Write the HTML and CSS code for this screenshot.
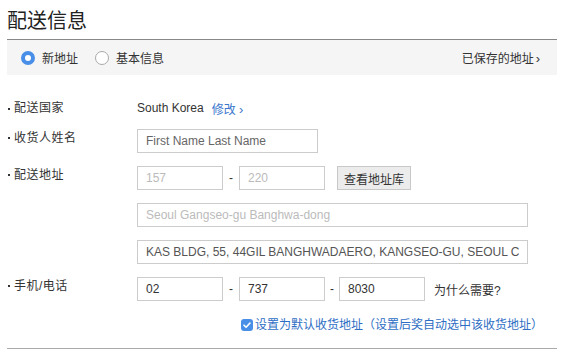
FILE: index.html
```html
<!DOCTYPE html>
<html lang="zh">
<head>
    <meta charset="UTF-8">
    <title>配送信息</title>
    <link rel="stylesheet" href="styles.css">
</head>
<body>
    <div class="page">
        <h1>配送信息</h1>
        <div class="tabs">
            <label class="tab"><input type="radio" name="mode" checked> 新地址</label>
            <label class="tab"><input type="radio" name="mode"> 基本信息</label>
            <a class="saved" href="#">已保存的地址<span class="arrow">›</span></a>
        </div>
        <form class="form">
            <div class="row row-country">
                <div class="label">配送国家</div>
                <div class="field">
                    <span class="country">South Korea</span>
                    <a class="link" href="#">修改 <span class="arrow">›</span></a>
                </div>
            </div>
            <div class="row">
                <div class="label">收货人姓名</div>
                <div class="field">
                    <input class="input input-name" type="text" value="First Name Last Name">
                </div>
            </div>
            <div class="row">
                <div class="label">配送地址</div>
                <div class="field">
                    <input class="input input-short" type="text" placeholder="157">
                    <span class="dash">-</span>
                    <input class="input input-short" type="text" placeholder="220">
                    <button class="btn" type="button">查看地址库</button>
                </div>
            </div>
            <div class="row">
                <div class="label"></div>
                <div class="field">
                    <input class="input input-long" type="text" placeholder="Seoul Gangseo-gu Banghwa-dong">
                </div>
            </div>
            <div class="row">
                <div class="label"></div>
                <div class="field">
                    <input class="input input-long filled" type="text" value="KAS BLDG, 55, 44GIL BANGHWADAERO, KANGSEO-GU, SEOUL CITY">
                </div>
            </div>
            <div class="row">
                <div class="label">手机/电话</div>
                <div class="field">
                    <input class="input input-short dark" type="text" value="02">
                    <span class="dash">-</span>
                    <input class="input input-short dark" type="text" value="737">
                    <span class="dash dash-narrow">-</span>
                    <input class="input input-short dark" type="text" value="8030">
                    <span class="why">为什么需要?</span>
                </div>
            </div>
            <div class="default-row">
                <label class="check">
                    <span class="box">
                        <svg width="12" height="12" viewBox="0 0 12 12"><path d="M3 6.2 L5.1 8.3 L9 4" fill="none" stroke="#fff" stroke-width="1.6" stroke-linecap="round" stroke-linejoin="round"/></svg>
                    </span>
                    设置为默认收货地址（设置后奖自动选中该收货地址）
                </label>
            </div>
        </form>
    </div>
</body>
</html>
```

FILE: styles.css
```css
body {
    margin: 0;
    padding: 0;
    background: #fff;
    color: #333;
    font-family: "Liberation Sans", "Noto Sans CJK SC", sans-serif;
    font-size: 12px;
}
.page {
    width: 550px;
    margin-left: 7px;
}
h1 {
    margin: 0;
    padding: 6px 0 3px 0;
    font-size: 20px;
    font-weight: normal;
    line-height: 30px;
    color: #222;
    border-bottom: 1px solid #888;
}
.tabs {
    display: flex;
    align-items: center;
    height: 35px;
    padding: 0 17px 0 14px;
    background: #f5f5f5;
}
.tab {
    display: flex;
    align-items: center;
    margin-right: 17px;
}
.tab input {
    appearance: none;
    -webkit-appearance: none;
    width: 14px;
    height: 14px;
    margin: 0 7px 0 0;
    border: 1px solid #aaa;
    border-radius: 50%;
    background: #fff;
    box-sizing: border-box;
}
.tab input:checked {
    border: 4.5px solid #4a8fe7;
    background: #fff;
}
.saved {
    margin-left: auto;
    color: #333;
    text-decoration: none;
}
.saved .arrow {
    margin-left: 2px;
}
.arrow {
    font-size: 13px;
}
.form {
    padding-top: 23px;
}
.row {
    display: flex;
    align-items: flex-start;
    margin-bottom: 13px;
}
.row-country {
    align-items: center;
    height: 20px;
    margin-bottom: 11px;
}
.label {
    position: relative;
    width: 123px;
    padding-left: 7px;
    padding-top: 1px;
    line-height: 16px;
    letter-spacing: 0.5px;
}
.row-country .label {
    padding-top: 0;
}
.label:not(:empty)::before {
    content: "";
    position: absolute;
    left: 1px;
    top: 8px;
    width: 2px;
    height: 2px;
    background: #333;
}
.field {
    display: flex;
    align-items: center;
}
.country {
    color: #333;
}
.link {
    margin-left: 8px;
    color: #3a77cc;
    text-decoration: none;
}
.input {
    box-sizing: border-box;
    height: 24px;
    padding: 0 8px;
    border: 1px solid #ccc;
    background: #fff;
    font-family: inherit;
    font-size: 12px;
    color: #666;
    outline: none;
}
.input::placeholder {
    color: #bbb;
}
.input-name {
    width: 181px;
}
.input-short {
    width: 86px;
}
.input-long {
    width: 391px;
}
.filled {
    color: #555;
}
.dark {
    color: #333;
}
.dash {
    width: 16px;
    text-align: center;
}
.dash-narrow {
    width: 14px;
}
.btn {
    height: 24px;
    margin-left: 12px;
    padding: 0 6px;
    border: 1px solid #c8c8c8;
    background: #ececec;
    font-family: inherit;
    font-size: 12px;
    color: #333;
}
.why {
    margin-left: 9px;
}
.default-row {
    padding: 3px 0 15px 234px;
    border-bottom: 1px solid #aaa;
}
.check {
    display: flex;
    align-items: center;
    color: #2e6ec4;
    line-height: 16px;
}
.box {
    display: inline-flex;
    width: 12px;
    height: 12px;
    margin-right: 2px;
    border-radius: 3px;
    background: #4a8fe7;
}
```
